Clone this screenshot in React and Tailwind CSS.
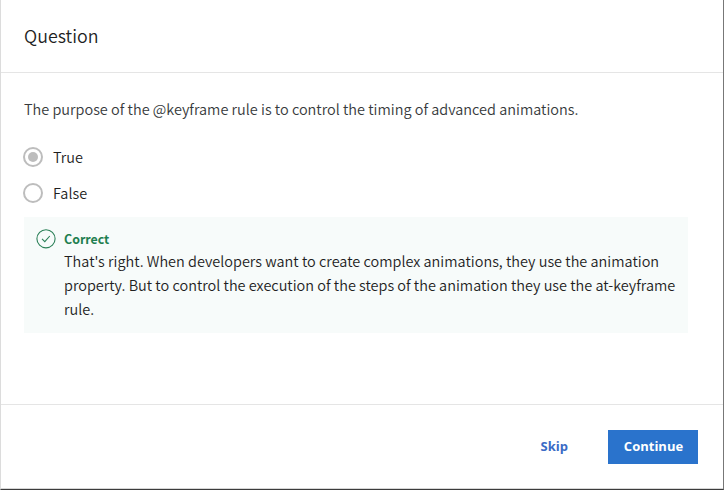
const sans = "font-['Noto_Sans_CJK_SC','Noto_Sans',sans-serif]";

function Radio({ label, checked }) {
  return (
    <label className="flex h-9 items-center gap-[10px]">
      <span
        role="radio"
        aria-checked={checked}
        className="flex size-5 items-center justify-center rounded-full border-2 border-[#bdbdbd] bg-white"
      >
        {checked && <span className="size-[10px] rounded-full bg-[#bdbdbd]" />}
      </span>
      <span className="text-[14.48px] leading-6 text-[#1f1f1f]">{label}</span>
    </label>
  );
}

function CheckIcon() {
  return (
    <svg className="mt-3 size-5 shrink-0" viewBox="0 0 20 20" fill="none" stroke="#2b8058">
      <circle cx="10" cy="9.8" r="9.1" strokeWidth="1.1" />
      <path d="M6 9.8 L8.8 12.6 L13.8 7" strokeWidth="1.1" />
    </svg>
  );
}

export default function App() {
  return (
    <div className={`flex h-[490px] w-[724px] flex-col border-l border-r border-b border-l-[#dcdcdc] border-r-[#777777] border-b-[#3c3c3c] bg-white font-[350] ${sans}`}>
      <header className="flex h-[73px] shrink-0 items-center border-b border-[#e5e5e5] pb-0.5 pl-[23px]">
        <h1 className="text-[17.85px] leading-6 text-[#1f1f1f]">Question</h1>
      </header>
      <main className="flex h-[332px] shrink-0 flex-col border-b border-[#e5e5e5] pl-[23px] pt-6">
        <p className="whitespace-nowrap text-[14.48px] leading-6 text-[#373a3c]">
          The purpose of the @keyframe rule is to control the timing of advanced animations.
        </p>
        <div className="-ml-px mt-[18px] flex flex-col">
          <Radio label="True" checked />
          <Radio label="False" checked={false} />
        </div>
        <section className="mt-1.5 flex h-[116px] w-[664px] gap-2 bg-[#f7fbfa] pl-3">
          <CheckIcon />
          <div className="pt-3">
            <h2 className="text-[12.4px] font-bold leading-5 text-[#1f7f50]">Correct</h2>
            <p className="whitespace-nowrap text-[14.48px] leading-6 text-[#1f1f1f]">
              That's right. When developers want to create complex animations, they use the animation
              <br />
              property. But to control the execution of the steps of the animation they use the at-keyframe
              <br />
              rule.
            </p>
          </div>
        </section>
      </main>
      <footer className="flex flex-1 items-center justify-end gap-10 border-b border-[#d6d6d6] pr-[25px] font-['Open_Sans','Noto_Sans',sans-serif] text-[13px] font-bold">
        <button className="text-[#3b6bc6]">Skip</button>
        <button className="h-[34px] w-[90px] bg-[#2a73cc] pl-px text-white">Continue</button>
      </footer>
    </div>
  );
}
